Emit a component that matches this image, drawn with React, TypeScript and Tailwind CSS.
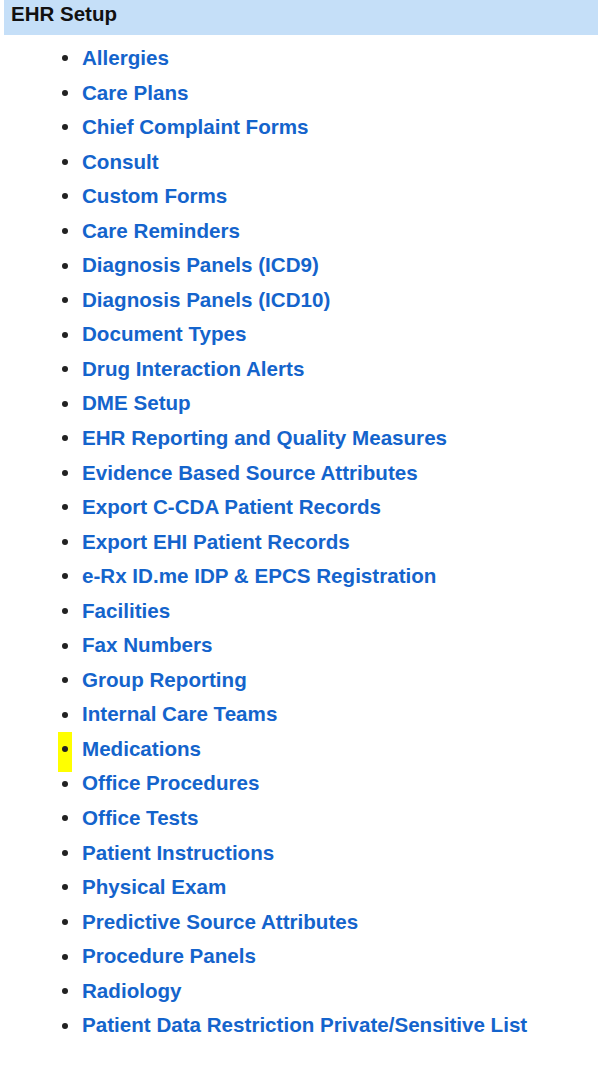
import React from "react";

const items: string[] = [
  "Allergies",
  "Care Plans",
  "Chief Complaint Forms",
  "Consult",
  "Custom Forms",
  "Care Reminders",
  "Diagnosis Panels (ICD9)",
  "Diagnosis Panels (ICD10)",
  "Document Types",
  "Drug Interaction Alerts",
  "DME Setup",
  "EHR Reporting and Quality Measures",
  "Evidence Based Source Attributes",
  "Export C-CDA Patient Records",
  "Export EHI Patient Records",
  "e-Rx ID.me IDP & EPCS Registration",
  "Facilities",
  "Fax Numbers",
  "Group Reporting",
  "Internal Care Teams",
  "Medications",
  "Office Procedures",
  "Office Tests",
  "Patient Instructions",
  "Physical Exam",
  "Predictive Source Attributes",
  "Procedure Panels",
  "Radiology",
  "Patient Data Restriction Private/Sensitive List",
];

export default function App() {
  return (
    <div
      className="w-[598px] h-[1078px] bg-white overflow-hidden"
      style={{ fontFamily: '"Liberation Sans", Arial, sans-serif' }}
    >
      <div className="ml-[4px] h-[35px] bg-[#c5dff8] pl-[7px] pt-[3px]">
        <span className="text-[20.5px] font-bold text-[#111] leading-[22px]">EHR Setup</span>
      </div>
      <ul className="mt-[6px] pl-[58px]">
        {items.map((name) => (
          <li key={name} className="flex items-center h-[34.55px]">
            <span
              className={
                "w-[14px] h-[40px] flex items-center justify-center translate-y-[3px] " +
                (name === "Medications" ? "bg-[#ffff00]" : "")
              }
            >
              <span className="block w-[6px] h-[6px] rounded-full bg-[#222] -translate-y-[3px]" />
            </span>
            <a
              href="#"
              className="ml-[10px] text-[20.6px] font-bold text-[#1464cc] leading-none"
            >
              {name}
            </a>
          </li>
        ))}
      </ul>
    </div>
  );
}
